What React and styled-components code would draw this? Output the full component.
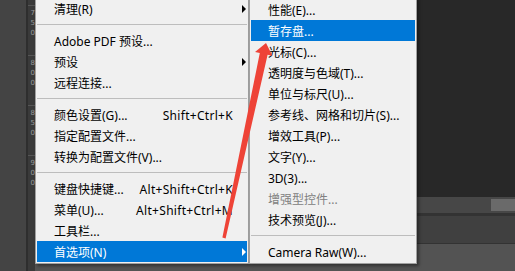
import styled, { createGlobalStyle } from 'styled-components';

const GlobalStyle = createGlobalStyle`
  html, body {
    margin: 0;
    padding: 0;
    background: #282828;
  }
  body {
    font-family: "Noto Sans", "Noto Sans CJK SC", sans-serif;
  }
`;

const editMenu = [
  { label: '清理(R)', arrow: true },
  { sep: true },
  { label: 'Adobe PDF 预设...' },
  { label: '预设', arrow: true },
  { label: '远程连接...' },
  { sep: true },
  { label: '颜色设置(G)...', shortcut: 'Shift+Ctrl+K' },
  { label: '指定配置文件...' },
  { label: '转换为配置文件(V)...' },
  { sep: true },
  { label: '键盘快捷键...', shortcut: 'Alt+Shift+Ctrl+K' },
  { label: '菜单(U)...', shortcut: 'Alt+Shift+Ctrl+M' },
  { label: '工具栏...' },
  { label: '首选项(N)', arrow: true, active: true },
];

const prefsMenu = [
  { label: '性能(E)...' },
  { label: '暂存盘...', active: true },
  { label: '光标(C)...' },
  { label: '透明度与色域(T)...' },
  { label: '单位与标尺(U)...' },
  { label: '参考线、网格和切片(S)...' },
  { label: '增效工具(P)...' },
  { label: '文字(Y)...' },
  { label: '3D(3)...' },
  { label: '增强型控件...', disabled: true },
  { label: '技术预览(J)...' },
  { sep: true },
  { label: 'Camera Raw(W)...' },
];

const rulerMarks = ['750', '800', '850', '900'];

function Menu({ items, width, offset }) {
  return (
    <MenuBox $width={width} $offset={offset}>
      {items.map((e, i) =>
        e.sep ? (
          <Separator key={i} />
        ) : (
          <Item key={i} $active={e.active} $disabled={e.disabled}>
            <Label>{e.label}</Label>
            {e.shortcut && <Shortcut>{e.shortcut}</Shortcut>}
            <ArrowSlot>{e.arrow && <SubArrow $active={e.active} />}</ArrowSlot>
          </Item>
        )
      )}
    </MenuBox>
  );
}

export default function App() {
  return (
    <Screen>
      <GlobalStyle />
      <SidePanel />
      <Ruler>
        {rulerMarks.map(m => (
          <RulerMark key={m}>
            {m.split('').map((d, i) => <span key={i}>{d}</span>)}
          </RulerMark>
        ))}
      </Ruler>
      <Workspace>
        <Canvas />
        <OptionsBar>
          <OptionsButton />
        </OptionsBar>
        <Divider />
        <PanelStrip />
        <Divider $thin />
        <PanelBottom />
      </Workspace>

      <MenuLayer>
        <Menu items={editMenu} width={214} offset={0} />
        <Menu items={prefsMenu} width={168} offset={1} />
      </MenuLayer>

      <Pointer viewBox="0 0 515 271" width="515" height="271">
        <polygon
          fill="#ee4337"
          points="222.4,237.6 225.6,238.4 267.6,54.8 272.4,55.8 266,43 255,52 259.8,53"
        />
      </Pointer>
    </Screen>
  );
}

const Screen = styled.div`
  position: relative;
  display: flex;
  width: 515px;
  height: 271px;
  overflow: hidden;
  background: #282828;
`;

const SidePanel = styled.div`
  width: 26px;
  background: #444444;
  border-right: 2px solid #2e2e2e;
`;

const Ruler = styled.div`
  width: 7px;
  display: flex;
  flex-direction: column;
  padding-top: 5px;
  background: #3a3a3a;
`;

const RulerMark = styled.div`
  height: 50px;
  display: flex;
  flex-direction: column;
  align-items: flex-end;
  gap: 2px;
  border-top: 1px solid #555555;
  padding-top: 3px;
  box-sizing: border-box;
  font-family: "DejaVu Sans", sans-serif;
  font-size: 7px;
  line-height: 8px;
  color: #9a9a9a;
`;

const Workspace = styled.div`
  flex: 1;
  display: flex;
  flex-direction: column;
`;

const Canvas = styled.div`
  height: 197px;
  background: #282828;
`;

const OptionsBar = styled.div`
  height: 16px;
  display: flex;
  justify-content: flex-end;
  align-items: center;
  background: #474747;
`;

const OptionsButton = styled.div`
  width: 24px;
  height: 12px;
  background: #6a6a6a;
`;

const Divider = styled.div`
  height: ${p => (p.$thin ? 1 : 3)}px;
  background: #333333;
`;

const PanelStrip = styled.div`
  height: 27px;
  background: #404040;
`;

const PanelBottom = styled.div`
  flex: 1;
  background: #535353;
`;

const MenuLayer = styled.div`
  position: absolute;
  top: -4px;
  left: 35px;
  display: flex;
  align-items: flex-start;
`;

const MenuBox = styled.div`
  width: ${p => p.$width}px;
  box-sizing: border-box;
  margin-top: ${p => p.$offset}px;
  padding: 1px;
  background: #f0f0f0;
  border: 1px solid #a0a0a0;
  box-shadow: 2px 2px 3px rgba(0, 0, 0, 0.4);
  font-size: 12px;
`;

const Item = styled.div`
  height: 21px;
  box-sizing: border-box;
  padding-top: 2px;
  display: flex;
  align-items: center;
  padding-left: 17px;
  white-space: nowrap;
  background: ${p => (p.$active ? '#0078d7' : 'transparent')};
  color: ${p => (p.$active ? '#ffffff' : p.$disabled ? '#808080' : '#000000')};
`;

const Label = styled.span`
  flex: 1;
  line-height: 19px;
`;

const Shortcut = styled.span`
  line-height: 19px;
  letter-spacing: 0.3px;
`;

const ArrowSlot = styled.span`
  width: 13px;
  height: 19px;
  margin-top: -2px;
  display: flex;
  align-items: center;
  justify-content: flex-end;
  padding-right: 1px;
`;

const SubArrow = styled.span`
  width: 0;
  height: 0;
  border-top: 4px solid transparent;
  border-bottom: 4px solid transparent;
  border-left: 4px solid ${p => (p.$active ? '#ffffff' : '#000000')};
`;

const Separator = styled.div`
  height: 1px;
  margin: 5px 0;
  background: #bdbdbd;
`;

const Pointer = styled.svg`
  position: absolute;
  top: 0;
  left: 0;
  pointer-events: none;
`;
